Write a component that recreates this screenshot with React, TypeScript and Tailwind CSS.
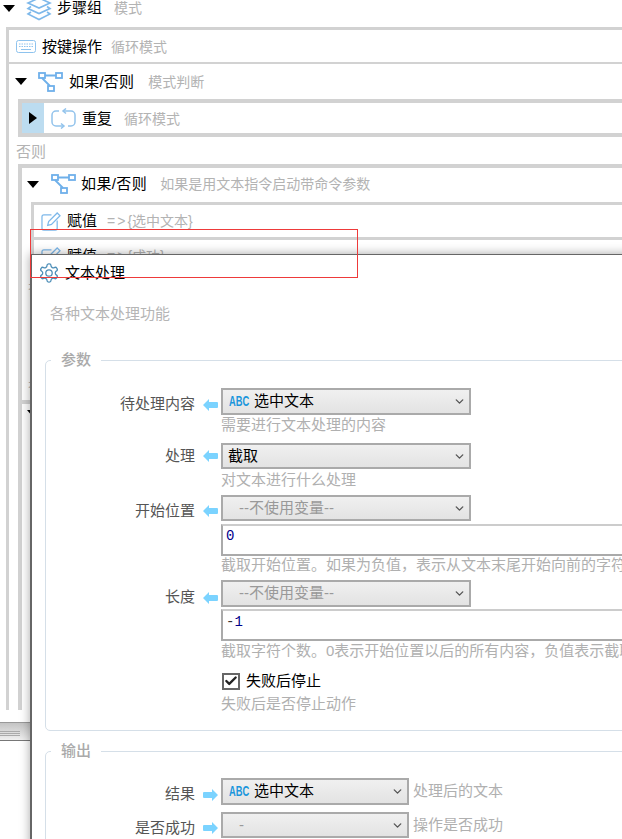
import { ChevronDown, Check } from 'lucide-react';
import type { ReactNode } from 'react';

const FONT = "font-['Liberation_Sans','Noto_Sans_CJK_SC',sans-serif]";

function Tri({ open = true }: { open?: boolean }) {
  return open ? (
    <span className="block w-0 h-0 border-x-[6px] border-x-transparent border-t-[7px] border-t-black" />
  ) : (
    <span className="block w-0 h-0 border-y-[6px] border-y-transparent border-l-[8px] border-l-black" />
  );
}

function LayersIcon() {
  return (
    <svg width="26" height="24" viewBox="0 0 26 24" fill="none" stroke="#7db8ea" strokeWidth="1.6">
      <path d="M13 1 L24 6 L13 11 L2 6 Z" />
      <path d="M5 9.5 L2 11.5 L13 16.5 L24 11.5 L21 9.5" />
      <path d="M5 15 L2 17 L13 22.5 L24 17 L21 15" />
    </svg>
  );
}

function KeyboardIcon() {
  return (
    <svg width="20" height="13" viewBox="0 0 20 13" fill="none" stroke="#8ec3ee" strokeWidth="1">
      <rect x="0.5" y="0.5" width="19" height="12" rx="2" />
      <path d="M3 4h14M3 6.500h14" strokeDasharray="1.5 1" />
      <path d="M5 9.500h10" />
    </svg>
  );
}

function BranchIcon() {
  return (
    <svg width="25" height="20" viewBox="0 0 25 20" fill="none" stroke="#6fb0ea" strokeWidth="1.8">
      <rect x="1" y="1" width="6" height="5" />
      <rect x="18" y="1" width="6" height="5" />
      <rect x="10" y="14" width="6" height="5" />
      <path d="M7 3.500h11M4 6l8 8" />
    </svg>
  );
}

function RepeatIcon() {
  return (
    <svg width="25" height="21" viewBox="0 0 25 21" fill="none" stroke="#92c3ec" strokeWidth="1.5">
      <path d="M8 3H5a4 4 0 0 0-4 4v7a4 4 0 0 0 4 4h7" />
      <path d="M17 18h3a4 4 0 0 0 4-4V7a4 4 0 0 0-4-4h-7" />
      <path d="M15 0.500L12 3l3 2.500M10 15.500l3 2.500-3 2.500" />
    </svg>
  );
}

function EditIcon() {
  return (
    <svg width="20" height="19" viewBox="0 0 21 20" fill="none" stroke="#7db8ea" strokeWidth="1.3">
      <path d="M11 3H3a2 2 0 0 0-2 2v12a2 2 0 0 0 2 2h12a2 2 0 0 0 2-2V9" />
      <path d="M7 14l1-4L17 1l3 3-9 9z" />
    </svg>
  );
}

function GearIcon() {
  return (
    <svg width="22" height="22" viewBox="0 0 24 24" fill="none" stroke="#4e8fb8" strokeWidth="1.400">
      <path d="M12.220 2h-.440a2 2 0 0 0-2 2v.180a2 2 0 0 1-1 1.730l-.430.250a2 2 0 0 1-2 0l-.150-.080a2 2 0 0 0-2.730.730l-.220.380a2 2 0 0 0 .730 2.730l.150.100a2 2 0 0 1 1 1.720v.510a2 2 0 0 1-1 1.740l-.150.090a2 2 0 0 0-.730 2.730l.220.380a2 2 0 0 0 2.730.730l.150-.080a2 2 0 0 1 2 0l.430.250a2 2 0 0 1 1 1.730V20a2 2 0 0 0 2 2h.440a2 2 0 0 0 2-2v-.180a2 2 0 0 1 1-1.730l.430-.250a2 2 0 0 1 2 0l.150.080a2 2 0 0 0 2.730-.730l.220-.390a2 2 0 0 0-.730-2.730l-.150-.080a2 2 0 0 1-1-1.740v-.500a2 2 0 0 1 1-1.740l.15-.090a2 2 0 0 0 .730-2.730l-.220-.380a2 2 0 0 0-2.730-.730l-.150.080a2 2 0 0 1-2 0l-.430-.250a2 2 0 0 1-1-1.730V4a2 2 0 0 0-2-2z" />
      <circle cx="12" cy="12" r="3.500" />
    </svg>
  );
}

function Arrow({ dir }: { dir: 'left' | 'right' }) {
  return (
    <svg width="15" height="12" viewBox="0 0 15 12" fill="#7bd3ff" className="shrink-0">
      {dir === 'left' ? <path d="M0 6L6 0v3h8a1 1 0 0 1 1 1v4a1 1 0 0 1-1 1H6v3z" /> : <path d="M15 6L9 0v3H1a1 1 0 0 0-1 1v4a1 1 0 0 0 1 1h8v3z" />}
    </svg>
  );
}

function Abc() {
  return <span className="ml-[1px] w-[19px] font-bold text-[15px] text-[#1a96dc] scale-x-[0.62] origin-left whitespace-nowrap">ABC</span>;
}

function Select({ width = 'w-[250px]', height = 'h-[27px]', muted, abc, children }: { width?: string; height?: string; muted?: boolean; abc?: boolean; children: ReactNode }) {
  return (
    <div className={`${width} ${height} shrink-0 flex items-center border-2 border-[#aaaaaa] bg-gradient-to-b from-[#f0f0f0] to-[#e3e3e3] pl-[5px] pr-[3px] text-[15px]`}>
      {abc && <Abc />}
      <span className={muted ? 'ml-[11px] text-[#999999]' : abc ? 'ml-[6px] text-black' : 'text-black'}>{children}</span>
      <ChevronDown size={13} strokeWidth={2.500} className="ml-auto text-[#555555]" />
    </div>
  );
}

// the label and arrow sit a few px lower than the select in most rows
function FieldRow({ label, children, dir = 'left', shift = 'translate-y-[3px]' }: { label: string; children: ReactNode; dir?: 'left' | 'right'; shift?: string }) {
  return (
    <div className="flex items-center">
      <div className={`flex items-center ${shift}`}>
        <div className="w-[149px] text-right text-[15px] text-[#555555]">{label}</div>
        <div className="w-[26px] pl-[8px]"><Arrow dir={dir} /></div>
      </div>
      {children}
    </div>
  );
}

function Hint({ children, className = '' }: { children: ReactNode; className?: string }) {
  return <div className={`pl-[175px] text-[15px] leading-[18px] text-[#b0b0b0] whitespace-nowrap ${className}`}>{children}</div>;
}

function CodeInput({ value, digitOnly, className = '' }: { value: string; digitOnly?: boolean; className?: string }) {
  return (
    <div className={`ml-[175px] h-[32px] w-[600px] border-2 border-[#aaaaaa] border-t-[#cccccc] pl-[3px] flex items-center font-['Liberation_Mono',monospace] text-[14px] ${className}`}>
      {digitOnly ? <span className="text-[#00008b]">{value}</span> : (
        <>
          <span className="text-[#333333]">-</span>
          <span className="text-[#00008b]">1</span>
        </>
      )}
    </div>
  );
}

function Legend({ title, children, className = '' }: { title: string; children: ReactNode; className?: string }) {
  return (
    <div className={`relative w-[640px] border border-[#d5dfe8] rounded-[5px] ${className}`}>
      <div className="absolute -top-[11px] left-[5px] bg-white px-[10px] text-[15px] leading-[20px] font-medium text-[#aaaaaa]">{title}</div>
      {children}
    </div>
  );
}

function Row({ className = '', children }: { className?: string; children: ReactNode }) {
  return <div className={`flex items-center whitespace-nowrap text-[15px] text-black ${className}`}>{children}</div>;
}

function Note({ children, className = 'ml-[9px]' }: { children: ReactNode; className?: string }) {
  return <span className={`text-[14px] text-[#b3b3b3] ${className}`}>{children}</span>;
}

function Dialog() {
  return (
    <div className="absolute left-[30px] top-[254px] w-[700px] h-[600px] bg-white border-l-2 border-t border-l-[#666666] border-t-[#666666] shadow-[0_0_10px_rgba(0,0,0,0.35)]">
      <div className="flex items-center h-[36px] pl-[6px] text-[15px] text-black">
        <GearIcon />
        <span className="ml-[5px]">文本处理</span>
      </div>
      <div className="pl-[18px] mt-[13px] text-[15px] leading-[20px] text-[#b5b5b5]">各种文本处理功能</div>

      <Legend title="参数" className="ml-[13px] mt-[36px] h-[371px]">
        <div className="pt-[27px] flex flex-col">
          <FieldRow label="待处理内容"><Select abc>选中文本</Select></FieldRow>
          <Hint className="mt-[1px]">需要进行文本处理的内容</Hint>
          <div className="mt-[9px]"><FieldRow label="处理" shift="translate-y-0"><Select height="h-[26px]">截取</Select></FieldRow></div>
          <Hint className="mt-[2px]">对文本进行什么处理</Hint>
          <div className="mt-[6px]"><FieldRow label="开始位置"><Select height="h-[26px]" muted>--不使用变量--</Select></FieldRow></div>
          <CodeInput className="mt-[3px] pb-[7px]" value="0" digitOnly />
          <Hint>截取开始位置。如果为负值，表示从文本末尾开始向前的字符位置</Hint>
          <div className="mt-[6px]"><FieldRow label="长度" shift="translate-y-[4px]"><Select muted>--不使用变量--</Select></FieldRow></div>
          <CodeInput className="mt-[2px] pb-[5px]" value="-1" />
          <Hint className="mt-[1px]">截取字符个数。0表示开始位置以后的所有内容，负值表示截取到倒数第几个字符</Hint>
          <div className="ml-[176px] mt-[10px] flex items-center text-[15px] text-black">
            <span className="w-[18px] h-[17px] border-2 border-[#666666] flex items-center justify-center">
              <Check size={14} strokeWidth={4} className="text-[#222222]" />
            </span>
            <span className="ml-[6px]">失败后停止</span>
          </div>
          <Hint className="mt-[2px]">失败后是否停止动作</Hint>
        </div>
      </Legend>

      <Legend title="输出" className="ml-[13px] mt-[20px] h-[120px]">
        <div className="pt-[26px] flex flex-col gap-[7px]">
          <div className="flex items-center">
            <FieldRow label="结果" dir="right"><Select width="w-[188px]" abc>选中文本</Select></FieldRow>
            <span className="ml-[4px] text-[15px] text-[#b0b0b0]">处理后的文本</span>
          </div>
          <div className="flex items-center">
            <FieldRow label="是否成功" dir="right"><Select width="w-[188px]" height="h-[26px]" muted>-</Select></FieldRow>
            <span className="ml-[4px] text-[15px] text-[#b0b0b0]">操作是否成功</span>
          </div>
        </div>
      </Legend>
    </div>
  );
}

export default function App() {
  return (
    <div className={`relative w-[622px] h-[839px] overflow-hidden bg-white ${FONT}`}>
      <div className="h-[722px] overflow-hidden">
        <Row className="h-[27px] pb-[10px] pl-[3px]">
          <Tri />
          <span className="ml-[11px]"><LayersIcon /></span>
          <span className="ml-[5px]">步骤组</span>
          <Note className="ml-[12px]">模式</Note>
        </Row>
        <div className="ml-[6px] h-[683px] border-l-[3px] border-t-[3px] border-[#d2d2d2]">
          <Row className="h-[32px] pl-[7px] border-b-[2px] border-[#d2d2d2] box-content">
            <KeyboardIcon />
            <span className="ml-[6px] pt-[2px]">按键操作</span>
            <Note className="ml-[9px] pt-[2px]">循环模式</Note>
          </Row>
          <Row className="h-[35px] pl-[6px]">
            <Tri />
            <span className="ml-[11px]"><BranchIcon /></span>
            <span className="ml-[6px] pt-[2px] tracking-[0.2px]">如果/否则</span>
            <Note className="ml-[14px] pt-[2px]">模式判断</Note>
          </Row>
          <div className="ml-[9px] border-l-[4px] border-y-[4px] border-[#d2d2d2]">
            <Row className="h-[30px]">
              <span className="w-[22px] h-full bg-[#bcdcf0] flex items-center justify-center"><Tri open={false} /></span>
              <span className="ml-[7px]"><RepeatIcon /></span>
              <span className="ml-[6px] pt-[2px]">重复</span>
              <Note className="ml-[12px] pt-[2px]">循环模式</Note>
            </Row>
          </div>
          <div className="ml-[7px] h-[27px] pt-[3px] flex items-center text-[15px] text-[#b3b3b3]">否则</div>
          <div className="ml-[9px] border-l-[4px] border-t-[4px] border-[#d2d2d2] h-[546px]">
            <Row className="h-[32px] pl-[5px]">
              <Tri />
              <span className="ml-[12px]"><BranchIcon /></span>
              <span className="ml-[5px] tracking-[0.4px]">如果/否则</span>
              <Note className="ml-[13px]">如果是用文本指令启动带命令参数</Note>
            </Row>
            <div className="ml-[9px] mt-[2px] border-l-[3px] border-t-[3px] border-[#d2d2d2] h-[78px]">
              <Row className="h-[32px] pl-[7px] border-b-[3px] border-[#d2d2d2] box-content">
                <EditIcon />
                <span className="ml-[6px]">赋值</span>
                <Note className="ml-[10px]"><span className="tracking-[2px]">=&gt;</span>{'{选中文本}'}</Note>
              </Row>
              <Row className="h-[32px] pl-[7px]">
                <EditIcon />
                <span className="ml-[6px]">赋值</span>
                <Note className="ml-[10px]"><span className="tracking-[2px]">=&gt;</span>{'{成功}'}</Note>
              </Row>
            </div>
            <div className="pl-[6px] h-[20px] flex items-center whitespace-nowrap text-[14px] text-[#b3b3b3]">否则</div>
            <div className="pl-[6px] mt-[78px] h-[20px] flex items-center whitespace-nowrap text-[14px] text-[#b3b3b3]">否则</div>
            <div className="mt-[2px] border-t-[4px] border-[#d2d2d2]">
              <Row className="h-[18px] pl-[5px]"><Tri /></Row>
            </div>
          </div>
        </div>
      </div>

      {/* splitter under the step list */}
      <div className="h-[17px] border-t border-[#999999] border-b border-b-[#777777] bg-gradient-to-b from-[#c4c4c4] to-[#f0f0f0] box-content">
        <div className="pt-[8px] flex flex-col gap-[1px]">
          <div className="w-[20px] h-px bg-[#aaaaaa]" />
          <div className="w-[20px] h-px bg-[#aaaaaa]" />
          <div className="w-[20px] h-px bg-[#aaaaaa]" />
        </div>
      </div>

      <Dialog />

      {/* selection rectangle drawn over the dialog title */}
      <div className="absolute left-[30px] top-[229px] w-[328px] h-[49px] border border-[#ee3a3a]" />
    </div>
  );
}
